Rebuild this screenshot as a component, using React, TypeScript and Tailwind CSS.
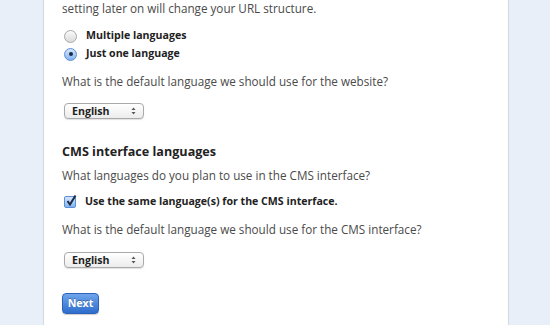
import React from 'react';

function Select() {
    return (
        <div className="flex h-[16px] w-[80px] items-center justify-between rounded-[4px] border border-[#a9a9a9] bg-gradient-to-b from-white to-[#ececec] pl-[7px] pr-[7px] text-[10.6px] font-bold text-[#222] shadow-[0_1px_1px_rgba(0,0,0,0.12)]">
            <span className="leading-[14px]">English</span>
            <svg width="5" height="8" viewBox="0 0 5 8">
                <path d="M0.5 3 L2.5 0.5 L4.5 3 Z" fill="#555" />
                <path d="M0.5 5 L2.5 7.5 L4.5 5 Z" fill="#555" />
            </svg>
        </div>
    );
}

function Radio({ checked }: { checked?: boolean }) {
    return checked ? (
        <span className="flex h-[13px] w-[13px] items-center justify-center rounded-full border border-[#5b8ed6] bg-gradient-to-b from-[#d6e7fc] to-[#82b3ee]">
            <span className="h-[4px] w-[4px] rounded-full bg-[#1d2a44]" />
        </span>
    ) : (
        <span className="h-[13px] w-[13px] rounded-full border border-[#a8a8a8] bg-gradient-to-b from-[#fafafa] to-[#dadada]" />
    );
}

export default function App() {
    return (
        <div className="flex h-[325px] w-[550px] overflow-hidden bg-[#e9eff8] pl-[43px] font-['Open_Sans',sans-serif] text-[#4a4a4a]">
            <div className="h-full w-[466px] border-x border-[#d4d9e0] bg-white pl-[18px]">
                <p className="text-[11.7px] leading-[16px]">setting later on will change your URL structure.</p>

                {/* Website language */}
                <div className="mt-[12px] flex flex-col gap-[2px] text-[10.6px] font-bold text-[#222]">
                    <label className="flex h-[16px] items-center gap-[9px] pl-[2px]">
                        <Radio />
                        Multiple languages
                    </label>
                    <label className="flex h-[16px] items-center gap-[9px] pl-[2px]">
                        <Radio checked />
                        Just one language
                    </label>
                </div>

                <p className="mt-[11px] text-[11.7px] leading-[16px]">What is the default language we should use for the website?</p>
                <div className="mt-[14px] pl-[2px]">
                    <Select />
                </div>

                {/* CMS */}
                <h2 className="mt-[24px] text-[12.6px] font-bold leading-[18px] text-[#222]">CMS interface languages</h2>
                <p className="mt-[6px] text-[11.7px] leading-[16px]">What languages do you plan to use in the CMS interface?</p>
                <label className="mt-[11px] flex h-[16px] items-center gap-[9px] pl-[2px] text-[10.6px] font-bold text-[#222]">
                    <span className="flex h-[12px] w-[12px] items-center justify-center rounded-[2px] border border-[#5b8ed6] bg-gradient-to-b from-[#d6e7fc] to-[#82b3ee]">
                        <svg width="12" height="13" viewBox="0 0 12 13" className="-mt-[3px] -mr-[2px]">
                            <path d="M2.5 7 L5 10.5 L10.5 1.5" fill="none" stroke="#1d2a44" strokeWidth="2" />
                        </svg>
                    </span>
                    Use the same language(s) for the CMS interface.
                </label>

                <p className="mt-[11px] text-[11.7px] leading-[16px]">What is the default language we should use for the CMS interface?</p>
                <div className="mt-[15px] pl-[2px]">
                    <Select />
                </div>

                <button className="mt-[25px] flex h-[21px] w-[37px] items-center justify-center rounded-[4px] border border-[#2c62b8] bg-gradient-to-b from-[#6ea5ec] to-[#2e6dcc] text-[10.6px] font-bold text-white shadow-[0_1px_1px_rgba(0,0,0,0.2)] [text-shadow:0_-1px_0_rgba(0,0,0,0.3)]">
                    Next
                </button>
            </div>
        </div>
    );
}
